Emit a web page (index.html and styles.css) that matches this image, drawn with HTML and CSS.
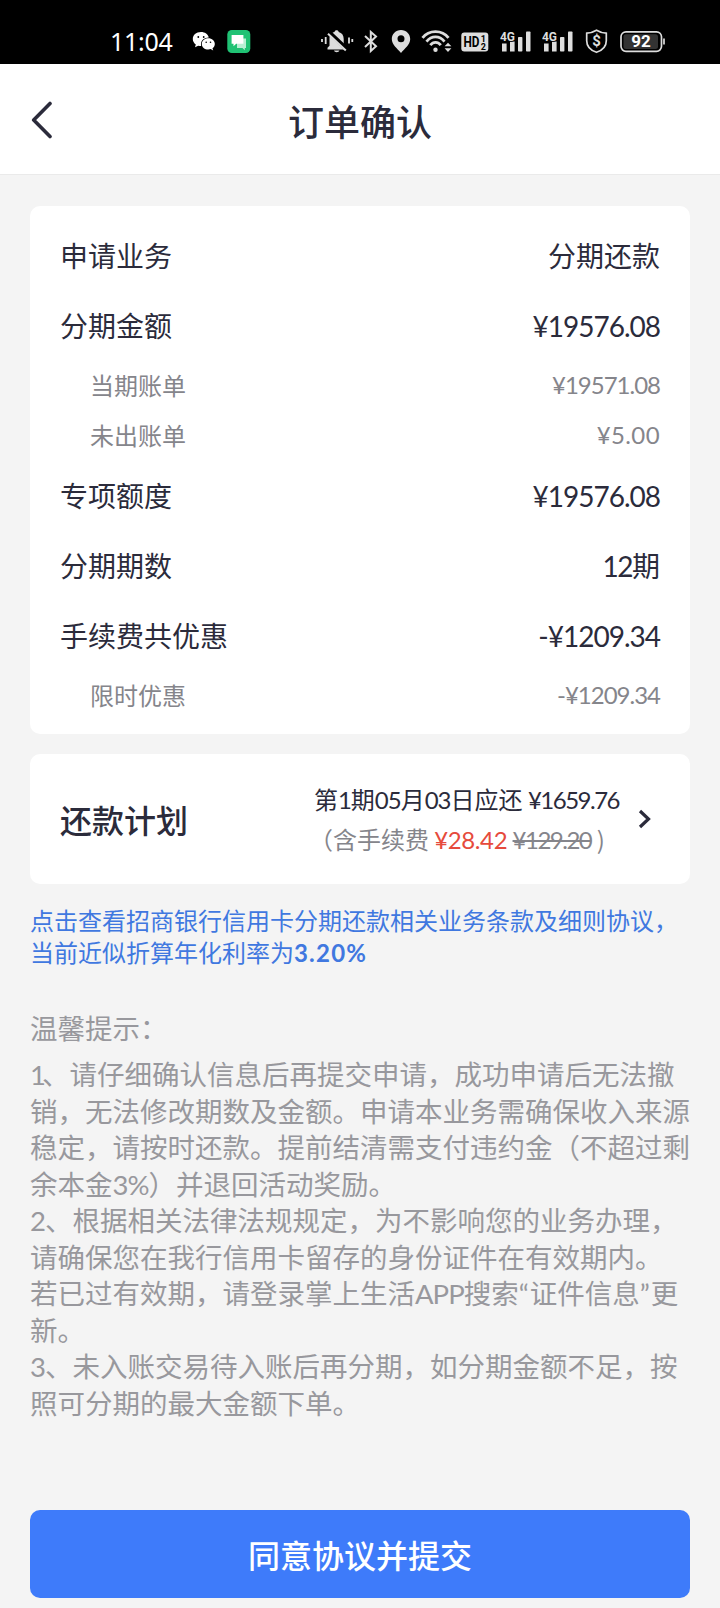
FILE: index.html
```html
<!DOCTYPE html>
<html lang="zh-CN">
<head>
<meta charset="utf-8">
<title>订单确认</title>
<link rel="stylesheet" href="styles.css">
</head>
<body>
<div class="status">
  <span class="clock">11:04</span>
  <svg class="wechat" width="24" height="30" viewBox="0 0 24 30">
    <path fill="#fff" d="M9 6C4 6 .8 9.200.8 13c0 2.300 1.200 4.200 3 5.500L3 21.300l3.200-1.600c1 .3 2 .4 3 .4C8 15 11.500 11.600 16.800 11.400 16 8.200 13 6 9 6z"/>
    <path fill="#fff" d="M16.300 12.300c-3.700 0-6.500 2.500-6.500 5.600s2.800 5.600 6.500 5.600c.8 0 1.600-.1 2.400-.4l2.500 1.400-.7-2.300c1.400-1 2.300-2.600 2.300-4.300 0-3.100-2.800-5.600-6.500-5.600z"/>
    <g fill="#000"><circle cx="6.300" cy="11" r=".9"/><circle cx="11.700" cy="11" r=".9"/><circle cx="14.200" cy="16.200" r=".8"/><circle cx="18.500" cy="16.200" r=".8"/></g>
  </svg>
  <svg class="msg" width="24" height="30" viewBox="0 0 24 30">
    <rect x=".3" y="4" width="23" height="23" rx="4.500" fill="#20c274"/>
    <path fill="#b9efd4" d="M10 12.500h9v9.500h-1.200v2.200L15.500 22H10z"/>
    <path fill="#fff" d="M4.600 9h11.800v8.800H9.200L6.500 20.200v-2.400H4.600z"/>
  </svg>
  <svg class="mute" width="34" height="30" viewBox="0 0 34 30">
    <g fill="#ddd"><path d="M6.500 23.500v-1.800l2-2V13c0-4 2.200-6.200 5-7 .2-2.500 4-2.500 4.200 0 3 .8 5 3.200 5 7v6.700l2 2v1.800z"/><path d="M13 24.400h5.400c-.5 2.300-4.900 2.300-5.400 0z"/></g>
    <path d="M7.500 5.800l19 18" stroke="#000" stroke-width="4.500"/>
    <path d="M7 7.800L24.800 24.500" stroke="#ddd" stroke-width="2"/>
    <path d="M1 13v3M4.700 11v7M28 11.500v6M31.300 13v3" stroke="#ddd" stroke-width="1.800"/>
  </svg>
  <svg class="bt" width="16" height="30" viewBox="0 0 16 30">
    <path d="M2 10l11 10.300-5.200 4.700V6l5.200 4.500L2 21" fill="none" stroke="#ddd" stroke-width="2"/>
  </svg>
  <svg class="pin" width="20" height="30" viewBox="0 0 20 30">
    <path fill="#ddd" fill-rule="evenodd" d="M10 4C4.700 4 .8 8 .8 13c0 5.500 5.500 9.500 9.200 14 3.700-4.500 9.200-8.500 9.200-14 0-5-3.900-9-9.200-9zm0 5.300a3.500 3.500 0 1 1 0 7 3.500 3.500 0 0 1 0-7z"/>
  </svg>
  <svg class="wifi" width="32" height="30" viewBox="0 0 32 30">
    <g fill="none" stroke="#ddd" stroke-width="2.800"><path d="M1.500 11.800C8 3.600 21 3.600 27.500 11.800"/><path d="M5.500 15.600c5-6.200 13-6.200 18 0"/><path d="M9.300 19.200c3-3.800 7.500-3.800 10.500 0"/></g>
    <circle cx="14.500" cy="23.800" r="2.200" fill="#ddd"/>
    <path fill="#ddd" d="M23.600 20.300l3.400-3.600 3.400 3.600zM23.600 22.300l3.400 3.600 3.400-3.600z"/>
  </svg>
  <svg class="hd" width="28" height="30" viewBox="0 0 28 30">
    <rect x=".3" y="6.500" width="27" height="19" rx="3" fill="#ddd"/>
    <text class="hd-text" x="2.500" y="21.300" textLength="16" lengthAdjust="spacingAndGlyphs">HD</text>
    <text class="hd-num" x="19.700" y="15.500">1</text><text class="hd-num" x="19.700" y="24">2</text>
  </svg>
  <svg class="sig" width="33" height="30" viewBox="0 0 33 30">
    <g fill="#ddd"><rect x="2" y="17.500" width="4.600" height="8"/><rect x="10" y="15.500" width="4.600" height="10"/><rect x="18" y="11" width="4.400" height="14.500" rx=".8"/><rect x="26" y="5.500" width="4.500" height="20" rx=".8"/></g>
    <text class="net" x="0" y="14.500" textLength="15" lengthAdjust="spacingAndGlyphs">4G</text>
  </svg>
  <svg class="sig second" width="33" height="30" viewBox="0 0 33 30">
    <g fill="#ddd"><rect x="2" y="17.500" width="4.600" height="8"/><rect x="10" y="15.500" width="4.600" height="10"/><rect x="18" y="11" width="4.400" height="14.500" rx=".8"/><rect x="26" y="5.500" width="4.500" height="20" rx=".8"/></g>
    <text class="net" x="0" y="14.500" textLength="15" lengthAdjust="spacingAndGlyphs">4G</text>
  </svg>
  <svg class="shield" width="24" height="30" viewBox="0 0 24 30">
    <path d="M11.500 4.200c3 1.800 6.200 2.800 9.800 3v7.500c0 6-4.500 9.800-9.800 11.600C6.200 24.500 1.700 20.700 1.700 14.700V7.200c3.600-.2 6.800-1.200 9.800-3z" fill="none" stroke="#ddd" stroke-width="1.700"/>
    <text class="dollar" x="11.500" y="20.200">$</text>
  </svg>
  <svg class="battery" width="48" height="30" viewBox="0 0 48 30">
    <rect x="1" y="5.800" width="40.500" height="19.500" rx="5" fill="none" stroke="#ddd" stroke-width="1.700"/>
    <rect x="3.500" y="8.200" width="34.500" height="14.700" rx="2.500" fill="#333"/>
    <path d="M44 12.500v6" stroke="#ddd" stroke-width="1.700"/>
    <text class="level" x="21" y="21.300">92</text>
  </svg>
</div>
<header class="nav">
  <svg class="back" width="24" height="40" viewBox="0 0 24 40"><path d="M20 4.500L3.700 21 20 37.500" fill="none" stroke="#2b2b3b" stroke-width="3.600" stroke-linecap="round" stroke-linejoin="round"/></svg>
  <h1 class="title">订单确认</h1>
</header>
<main class="page">
  <section class="card details">
    <div class="row"><span>申请业务</span><span>分期还款</span></div>
    <div class="row"><span>分期金额</span><span class="num">¥19576.08</span></div>
    <div class="row sub"><span>当期账单</span><span class="num">¥19571.08</span></div>
    <div class="row sub"><span>未出账单</span><span class="num wide">¥5.00</span></div>
    <div class="row"><span>专项额度</span><span class="num">¥19576.08</span></div>
    <div class="row"><span>分期期数</span><span><span class="num tight">12</span>期</span></div>
    <div class="row"><span>手续费共优惠</span><span class="num">-¥1209.34</span></div>
    <div class="row sub"><span>限时优惠</span><span class="num">-¥1209.34</span></div>
  </section>
  <section class="card plan">
    <h2 class="plan-title">还款计划</h2>
    <div class="plan-info">
      <div class="due">第<span class="num">1</span>期<span class="num">05</span>月<span class="num">03</span>日应还 <span class="num tight">¥1659.76</span></div>
      <div class="fee">（含手续费 <span class="num now">¥28.42</span> <s class="num tight">¥129.20</s> <span>)</span></div>
    </div>
    <svg class="arrow" width="16" height="22" viewBox="0 0 16 22"><path d="M3 3l8.500 8L3 19" fill="none" stroke="#2b2b3b" stroke-width="3.200"/></svg>
  </section>
  <a class="terms">点击查看招商银行信用卡分期还款相关业务条款及细则协议，<br>当前近似折算年化利率为<b class="rate">3.20%</b></a>
  <section class="tips">
    <h3 class="tips-title">温馨提示：</h3>
    <p class="tip">
      <span class="line"><span class="num first">1</span>、请仔细确认信息后再提交申请，成功申请后无法撤</span>
      <span class="line">销，无法修改期数及金额。申请本业务需确保收入来源</span>
      <span class="line">稳定，请按时还款。提前结清需支付违约金（不超过剩</span>
      <span class="line">余本金<span class="num">3%</span>）并退回活动奖励。</span>
    </p>
    <p class="tip">
      <span class="line"><span class="num">2</span>、根据相关法律法规规定，为不影响您的业务办理，</span>
      <span class="line">请确保您在我行信用卡留存的身份证件在有效期内。</span>
      <span class="line">若已过有效期，请登录掌上生活<span class="num">APP</span>搜索<span class="num quote">“</span>证件信息<span class="num quote">”</span>更</span>
      <span class="line">新。</span>
    </p>
    <p class="tip">
      <span class="line"><span class="num">3</span>、未入账交易待入账后再分期，如分期金额不足，按</span>
      <span class="line">照可分期的最大金额下单。</span>
    </p>
  </section>
  <button class="submit">同意协议并提交</button>
</main>
</body>
</html>
```
FILE: styles.css
```css
* { box-sizing: border-box; }
body {
  margin: 0;
  width: 720px;
  height: 1608px;
  overflow: hidden;
  background: #f4f4f4;
  color: #2b2b3b;
  font-family: "Noto Sans CJK SC", sans-serif;
  font-size: 28px;
}
h1, h2, h3, p { margin: 0; }
svg { display: block; flex: none; }

.status {
  display: flex;
  height: 64px;
  padding: 26px 0 0 110px;
  background: #000;
  color: #fff;
}
.clock { width: 82px; font: 25px/31px "Noto Sans", sans-serif; letter-spacing: -0.3px; }
.msg { margin-left: 11px; }
.mute { margin-left: 70px; }
.bt { margin-left: 8px; }
.pin { margin-left: 12px; }
.wifi { margin-left: 10px; }
.hd { margin-left: 8px; }
.sig { margin-left: 11px; }
.sig.second { margin-left: 9px; }
.shield { margin-left: 10px; }
.battery { margin-left: 11px; }
.hd-text { font: bold 15px Roboto, sans-serif; fill: #000; }
.hd-num { font: bold 9px Roboto, sans-serif; fill: #000; }
.net { font: bold 13.5px Roboto, sans-serif; fill: #ddd; stroke: #000; stroke-width: 1.5px; paint-order: stroke; }
.dollar { font: bold 15px Roboto, sans-serif; fill: #ddd; text-anchor: middle; }
.level { font: bold 17px Roboto, sans-serif; fill: #fff; text-anchor: middle; }

.nav {
  display: grid;
  grid-template-columns: 60px 1fr 60px;
  align-items: center;
  height: 111px;
  padding: 0 30px;
  background: #fff;
  border-bottom: 1px solid #eaeaea;
}
.title { font-size: 36px; font-weight: 500; line-height: 52px; padding-top: 1px; text-align: center; }

.page { display: flex; flex-direction: column; height: 1433px; padding: 31px 30px 10px; }
.card { flex: none; background: #fff; border-radius: 10px; }
.num { font-family: Lato, Roboto, sans-serif; letter-spacing: -1px; }
.num.wide { letter-spacing: 0.4px; }
.num.tight { letter-spacing: -1.5px; }
.num.now { letter-spacing: -0.4px; }
.num.first { letter-spacing: -4px; }
.num.quote { letter-spacing: 1px; }
.details { height: 528px; padding: 15px 30px 13px; }
.row { display: flex; justify-content: space-between; height: 70px; line-height: 68px; }
.row > .num { line-height: 70px; }
.row.sub { height: 50px; padding-left: 30px; line-height: 48px; font-size: 24px; color: #85858b; }
.row.sub > .num { line-height: 48px; }

.plan { display: flex; align-items: center; height: 130px; margin-top: 20px; padding: 0 30px; }
.plan-title { font-size: 32px; font-weight: 500; line-height: 48px; }
.plan-info { flex: none; margin-left: auto; font-size: 24px; line-height: 39px; white-space: nowrap; }
.fee { margin-left: -5px; color: #85858b; }
.now { color: #e64a3c; }
.arrow { margin-left: 18px; margin-right: 7px; }

.terms { margin-top: 20px; color: #4078e0; font-size: 24px; line-height: 32px; white-space: nowrap; }
.rate { font-family: Lato, sans-serif; letter-spacing: 1.2px; }
.tips { margin-top: 38px; color: #98989d; font-size: 27.5px; white-space: nowrap; }
.tips-title { margin-bottom: 8px; font-size: inherit; font-weight: 400; line-height: 40px; }
.line { display: block; height: 36.5px; line-height: 36px; }
.line .num { line-height: 1; }
.submit {
  flex: none;
  height: 88px;
  margin-top: auto;
  border: 0;
  border-radius: 10px;
  background: #3e7bfa;
  color: #fff;
  font: 500 32px "Noto Sans CJK SC", sans-serif;
}
```
